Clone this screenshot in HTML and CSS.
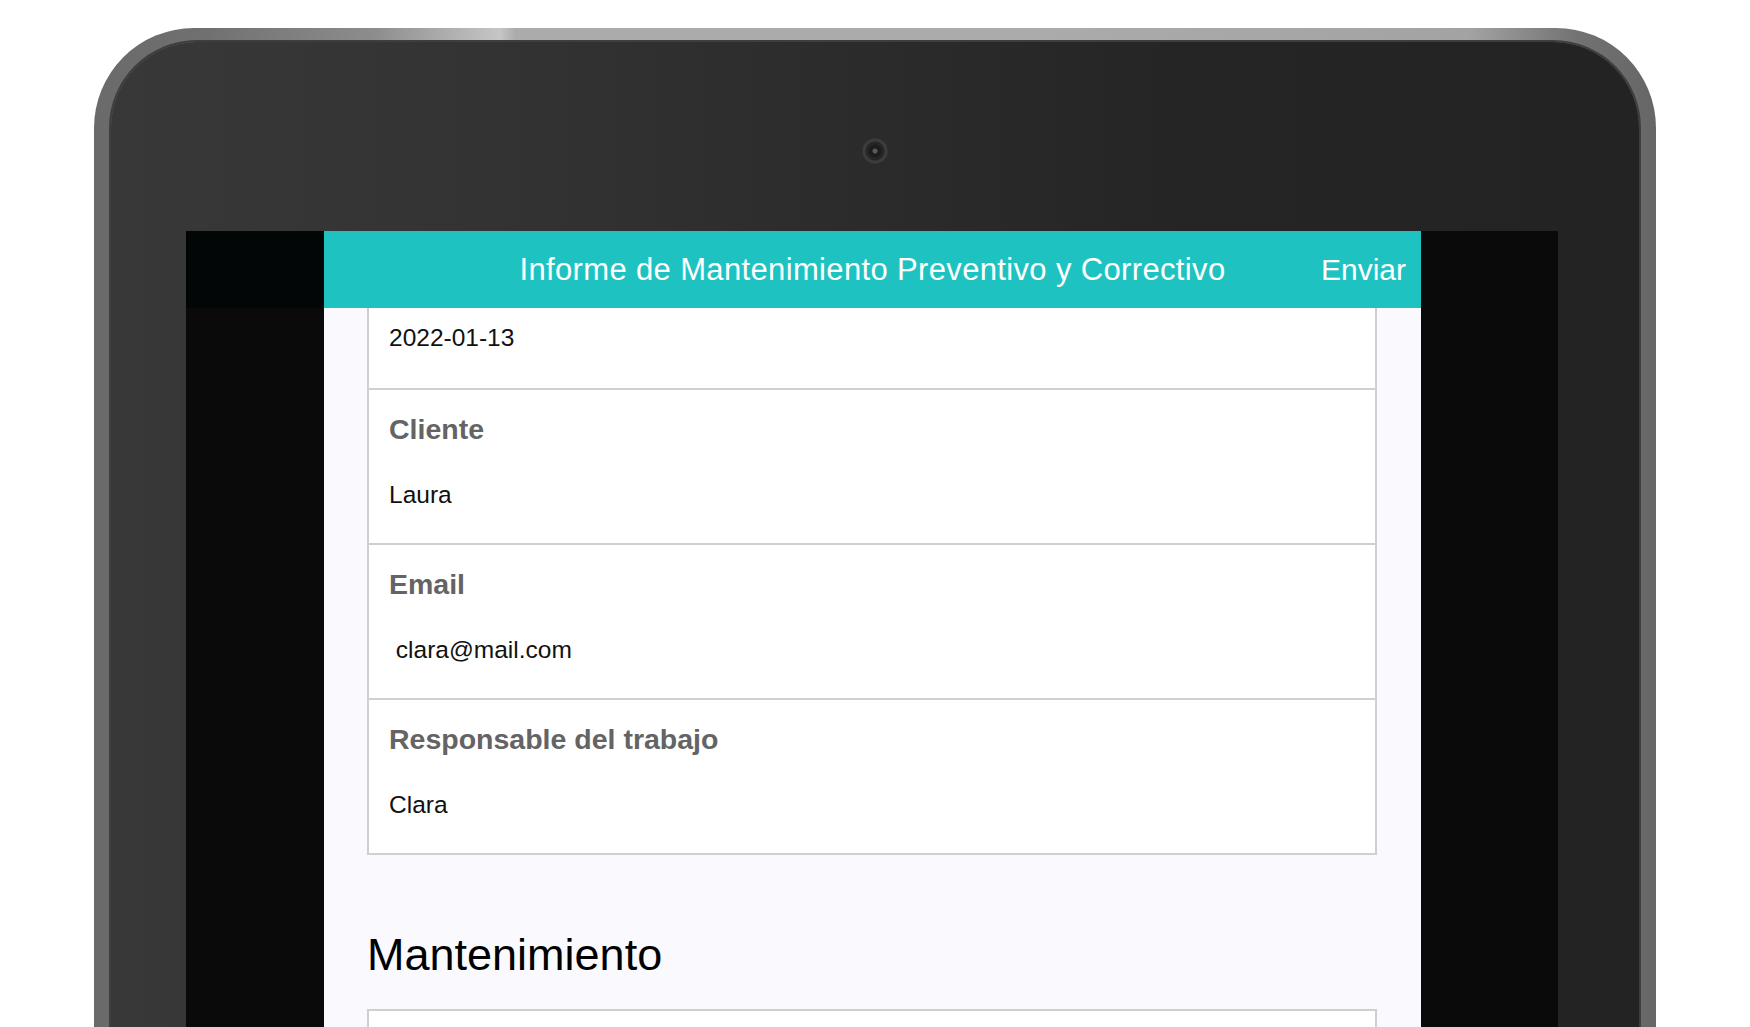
FILE: index.html
```html
<!DOCTYPE html>
<html lang="es">
<head>
<meta charset="utf-8">
<title>Informe de Mantenimiento</title>
<link rel="stylesheet" href="styles.css">
</head>
<body>
<div class="device">
  <div class="bezel">
    <div class="camera"></div>
    <div class="screen">
      <div class="side side-left"><div class="side-top"></div></div>
      <div class="app">
        <header class="app-bar">
          <span class="app-bar-spacer"></span>
          <h1 class="app-title">Informe de Mantenimiento Preventivo y Correctivo</h1>
          <button class="app-action" type="button">Enviar</button>
        </header>
        <main class="app-content">
          <section class="form-card form-card-scrolled">
            <div class="field field-partial">
              <div class="field-value">2022-01-13</div>
            </div>
            <div class="field">
              <div class="field-label">Cliente</div>
              <div class="field-value">Laura</div>
            </div>
            <div class="field">
              <div class="field-label">Email</div>
              <div class="field-value"> clara@mail.com</div>
            </div>
            <div class="field">
              <div class="field-label">Responsable del trabajo</div>
              <div class="field-value">Clara</div>
            </div>
          </section>
          <h2 class="section-title">Mantenimiento</h2>
          <section class="form-card form-card-empty"></section>
        </main>
      </div>
      <div class="side side-right"></div>
    </div>
  </div>
</div>
</body>
</html>
```

FILE: styles.css
```css
html, body {
  margin: 0;
  height: 1027px;
  overflow: hidden;
  background: #ffffff;
}

body {
  font-family: "Liberation Sans", Arial, Helvetica, sans-serif;
}

.device {
  box-sizing: border-box;
  margin: 28px 0 0 94px;
  width: 1562px;
  height: 1100px;
  padding: 14px 17px 0;
  display: flex;
  border-radius: 100px 100px 0 0;
  background: linear-gradient(90deg, #6a6a6a 0%, #707070 7%, #8d8d8d 18%, #c6c6c6 26%, #ababab 27%, #ababab 60%, #a3a3a3 88%, #727272 95%, #666666 100%);
}

.bezel {
  flex: 1;
  display: flex;
  flex-direction: column;
  padding: 0 81px 0 75px;
  border-radius: 86px 86px 0 0;
  background: linear-gradient(90deg, #383838 0%, #333333 25%, #2b2b2b 50%, #252525 70%, #232323 100%);
  box-shadow: 0 0 0 2px #3e3e3e;
}

.camera {
  flex-shrink: 0;
  align-self: center;
  width: 28px;
  height: 28px;
  margin: 95px 0 66px 6px;
  border-radius: 50%;
  background: radial-gradient(circle, #5a5a5a 0 2px, #1c1c1c 3px 6px, #262626 7px 9px, #3c3c3c 10px 12px, #2c2c2c 13px);
}

.screen {
  flex: 1;
  min-height: 0;
  display: flex;
  background: #0a0a0a;
}

.side-left {
  width: 138px;
}

.side-top {
  height: 77px;
  background: #020606;
}

.side-right {
  width: 137px;
}

.app {
  flex: 1;
  min-width: 0;
  min-height: 0;
  display: flex;
  flex-direction: column;
  background: #f9f9fe;
}

.app-bar {
  flex-shrink: 0;
  box-sizing: border-box;
  height: 77px;
  padding: 0 15px;
  display: grid;
  grid-template-columns: 1fr auto 1fr;
  align-items: center;
  background: #1ec3c1;
  color: #ffffff;
}

.app-title {
  margin: 0;
  font-size: 31px;
  font-weight: 400;
  letter-spacing: 0.35px;
  white-space: nowrap;
}

.app-action {
  justify-self: end;
  padding: 0;
  border: 0;
  background: none;
  color: #ffffff;
  font-family: inherit;
  font-size: 30px;
}

.app-content {
  flex: 1;
  min-height: 0;
  overflow: hidden;
  padding: 0 44px 0 43px;
}

.form-card {
  background: #ffffff;
  border: 2px solid #cfcfcf;
  border-bottom: 0;
}

.form-card-scrolled {
  border-top: 0;
}

.form-card-empty {
  height: 160px;
}

.field {
  padding: 22px 20px 33px;
  border-bottom: 2px solid #d0d0d0;
}

.field-partial {
  padding-top: 15px;
  padding-bottom: 35px;
}

.field-partial .field-value {
  margin-top: 0;
}

.field-label {
  font-size: 28.5px;
  line-height: 34px;
  font-weight: 700;
  color: #646464;
}

.field-value {
  margin-top: 34px;
  font-size: 24.5px;
  line-height: 30px;
  color: #111111;
  white-space: pre;
}

.section-title {
  margin: 74px 0 28px;
  font-size: 45px;
  line-height: 52px;
  font-weight: 400;
  color: #000000;
}
```
